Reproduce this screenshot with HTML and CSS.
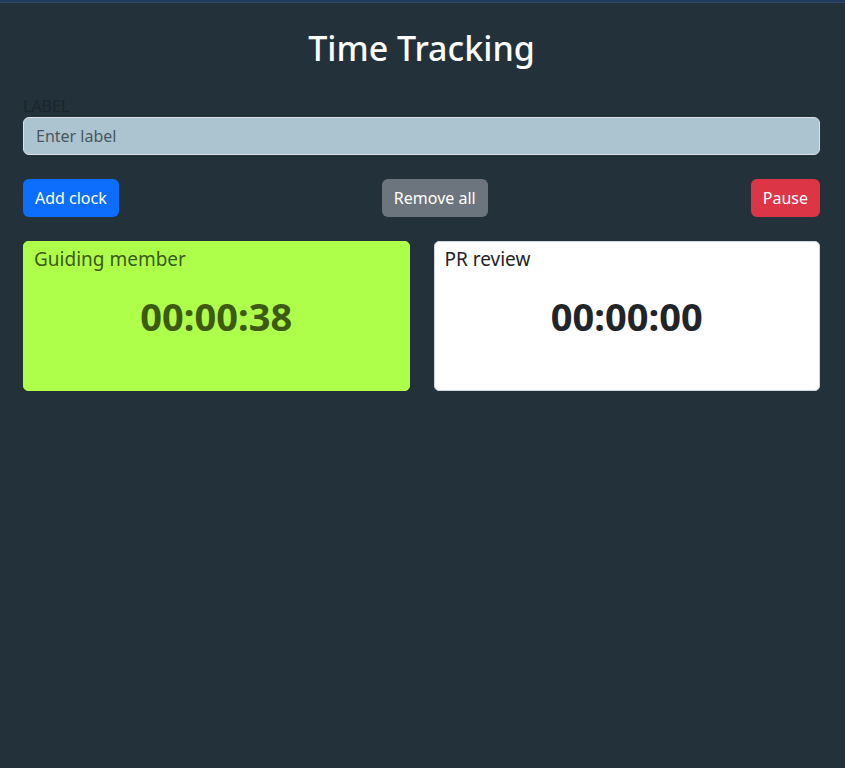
FILE: index.html
```html
<!DOCTYPE html>
<html>
<head>
<meta charset="utf-8">
<link rel="stylesheet" href="styles.css">
</head>
<body>
<div class="app">
  <h1 class="title">Time Tracking</h1>
  <div class="field">
    <label class="field-label">LABEL</label>
    <input class="field-input" type="text" placeholder="Enter label">
  </div>
  <div class="actions">
    <button class="btn btn-primary">Add clock</button>
    <button class="btn btn-secondary">Remove all</button>
    <button class="btn btn-danger">Pause</button>
  </div>
  <div class="clocks">
    <div class="clock clock-active">
      <div class="clock-label">Guiding member</div>
      <div class="clock-time">00:00:38</div>
    </div>
    <div class="clock">
      <div class="clock-label">PR review</div>
      <div class="clock-time">00:00:00</div>
    </div>
  </div>
</div>
</body>
</html>
```
FILE: styles.css
```css
html, body {
  margin: 0;
  padding: 0;
}
body {
  background: #22313a;
  font-family: "Noto Sans", "Open Sans", sans-serif;
  min-height: 768px;
  border-top: 2px solid #1f3a5f;
  box-sizing: border-box;
}
.app {
  border-top: 1px solid #34485e;
  padding: 0 25px 0 23px;
}
.title {
  margin: 25px 0 0;
  text-align: center;
  color: #ffffff;
  font-size: 34px;
  font-weight: 500;
  line-height: 40px;
}
.field {
  margin-top: 29px;
  display: flex;
  flex-direction: column;
}
.field-label {
  color: #1c262c;
  font-size: 16px;
  line-height: 18px;
}
.field-input {
  margin-top: 2px;
  height: 38px;
  box-sizing: border-box;
  background: #abc4cf;
  border: 1px solid #dee2e6;
  border-radius: 6px;
  padding: 0 12px;
  font-family: inherit;
  font-size: 16px;
  color: #212529;
}
.field-input::placeholder {
  color: #4a5660;
}
.actions {
  margin-top: 24px;
  display: flex;
  justify-content: space-between;
}
.btn {
  height: 38px;
  padding: 0 12px;
  border: none;
  border-radius: 6px;
  color: #ffffff;
  font-family: inherit;
  font-size: 16px;
}
.btn-primary { background: #0d6efd; }
.btn-secondary { background: #6c757d; }
.btn-danger { background: #dc3545; }
.clocks {
  margin-top: 24px;
  display: grid;
  grid-template-columns: 1fr 1fr;
  gap: 24px;
}
.clock {
  height: 150px;
  box-sizing: border-box;
  background: #ffffff;
  border: 1px solid #ced4da;
  border-radius: 5px;
  padding: 4px 10px;
  color: #212529;
}
.clock-active {
  background: #adff4a;
  border-color: #adff4a;
  color: #3d5a12;
}
.clock-label {
  font-size: 19px;
  line-height: 26px;
}
.clock-time {
  margin-top: 21px;
  text-align: center;
  font-size: 38px;
  font-weight: 700;
  line-height: 46px;
}
```
